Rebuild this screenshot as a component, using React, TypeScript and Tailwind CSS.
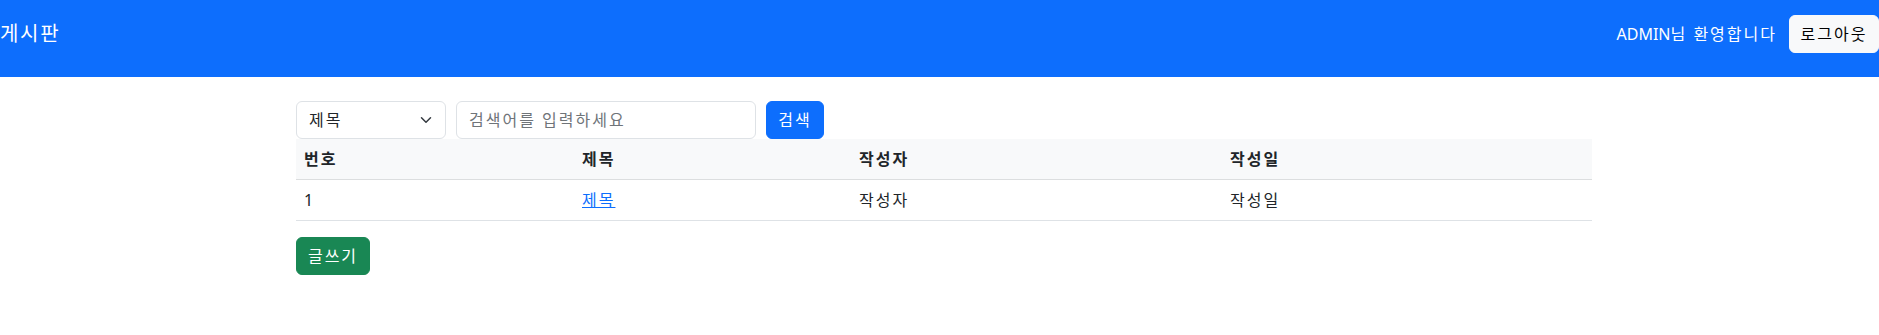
import React from "react";

const font = {
  fontFamily: '"Segoe UI", "Noto Sans", "Noto Sans CJK KR", sans-serif',
};

const rows = [{ no: 1, title: "제목", writer: "작성자", date: "작성일" }];

export default function App() {
  return (
    <div className="min-h-[335px] bg-white text-[#212529] text-[16px] leading-[24px]" style={font}>
      {/* navbar */}
      <nav className="h-[77px] bg-[#0d6efd] pt-[15px]">
        <div className="flex h-[38px] items-center justify-between">
          <a className="text-[20px] leading-[30px] tracking-[1.7px] text-white">게시판</a>
          <div className="flex items-center">
            <span className="mr-[12px] text-white">
              ADMIN<span className="tracking-[2px]">님 환영합니다</span>
            </span>
            <button className="h-[38px] w-[90px] whitespace-nowrap rounded-[6px] border border-[#f8f9fa] bg-[#f8f9fa] tracking-[2px] text-black">
              로그아웃
            </button>
          </div>
        </div>
      </nav>

      <main className="ml-[296px] mt-[24px] w-[1296px] tracking-[2px]">
        {/* search */}
        <form className="flex gap-[10px]">
          <div className="relative w-[150px]">
            <select className="h-[38px] w-full appearance-none rounded-[6px] border border-[#dee2e6] bg-white pl-[12px] pr-[36px] text-[#212529] tracking-[2px] outline-none">
              <option>제목</option>
              <option>작성자</option>
            </select>
            <svg
              className="pointer-events-none absolute right-[14px] top-[13px]"
              width="12"
              height="12"
              viewBox="0 0 16 16"
              fill="none"
              stroke="#343a40"
              strokeWidth="2"
              strokeLinecap="round"
              strokeLinejoin="round"
            >
              <path d="m2 5 6 6 6-6" />
            </svg>
          </div>
          <input
            className="h-[38px] w-[300px] rounded-[6px] border border-[#dee2e6] px-[12px] tracking-[2px] outline-none placeholder:text-[#6f7479]"
            placeholder="검색어를 입력하세요"
          />
          <button
            type="button"
            className="h-[38px] w-[58px] whitespace-nowrap rounded-[6px] border border-[#0d6efd] bg-[#0d6efd] text-white"
          >
            검색
          </button>
        </form>

        {/* list */}
        <table className="w-full border-collapse text-left">
          <thead className="bg-[#f8f9fa]">
            <tr className="border-b border-[#dcdedf]">
              <th className="w-[278px] p-[8px] font-bold">번호</th>
              <th className="w-[277px] p-[8px] font-bold">제목</th>
              <th className="w-[371px] p-[8px] font-bold">작성자</th>
              <th className="p-[8px] font-bold">작성일</th>
            </tr>
          </thead>
          <tbody>
            {rows.map((r) => (
              <tr key={r.no} className="border-b border-[#dee2e6]">
                <td className="p-[8px] tracking-normal">{r.no}</td>
                <td className="p-[8px]">
                  <a className="text-[#0d6efd] underline">{r.title}</a>
                </td>
                <td className="p-[8px]">{r.writer}</td>
                <td className="p-[8px]">{r.date}</td>
              </tr>
            ))}
          </tbody>
        </table>

        <button className="mt-[16px] h-[38px] w-[74px] whitespace-nowrap rounded-[6px] border border-[#198754] bg-[#198754] text-white">
          글쓰기
        </button>
      </main>
    </div>
  );
}
